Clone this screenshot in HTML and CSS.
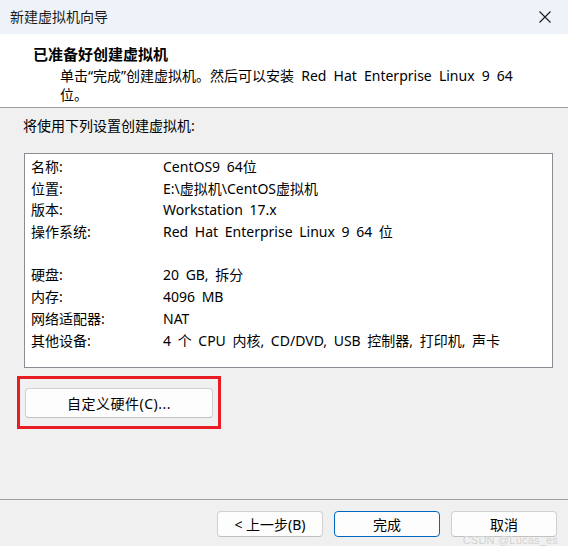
FILE: index.html
```html
<!DOCTYPE html>
<html lang="zh-CN">
<head>
<meta charset="utf-8">
<title>新建虚拟机向导</title>
<link rel="stylesheet" href="styles.css">
</head>
<body>
<div class="window">
  <div class="titlebar">
    <span class="title">新建虚拟机向导</span>
    <svg class="close" width="12" height="12" viewBox="0 0 12 12"><path d="M0.5 0.5 L11.5 11.5 M11.5 0.5 L0.5 11.5" stroke="#1a1a1a" stroke-width="1.1" fill="none"/></svg>
  </div>
  <div class="header">
    <div class="h-title">已准备好创建虚拟机</div>
    <div class="h-sub">单击“完成”创建虚拟机。然后可以安装 Red Hat Enterprise Linux 9 64<br>位。</div>
  </div>
  <div class="content">
    <div class="intro">将使用下列设置创建虚拟机:</div>
    <div class="summary">
      <div class="row"><span class="lbl">名称:</span><span class="val">CentOS9 64位</span></div>
      <div class="row"><span class="lbl">位置:</span><span class="val">E:\虚拟机\CentOS虚拟机</span></div>
      <div class="row"><span class="lbl">版本:</span><span class="val">Workstation 17.x</span></div>
      <div class="row"><span class="lbl">操作系统:</span><span class="val">Red Hat Enterprise Linux 9 64 位</span></div>
      <div class="row blank"></div>
      <div class="row"><span class="lbl">硬盘:</span><span class="val">20 GB, 拆分</span></div>
      <div class="row"><span class="lbl">内存:</span><span class="val">4096 MB</span></div>
      <div class="row"><span class="lbl">网络适配器:</span><span class="val">NAT</span></div>
      <div class="row"><span class="lbl">其他设备:</span><span class="val">4 个 CPU 内核, CD/DVD, USB 控制器, 打印机, 声卡</span></div>
    </div>
    <div class="highlight">
      <button class="btn custom">自定义硬件(C)...</button>
    </div>
  </div>
  <div class="footer">
    <button class="btn">&lt; 上一步(B)</button>
    <button class="btn primary">完成</button>
    <button class="btn">取消</button>
  </div>
  <div class="watermark">CSDN @Lucas_es</div>
</div>
</body>
</html>
```
FILE: styles.css
```css
* { box-sizing: border-box; }
html, body { margin: 0; padding: 0; }
body {
  width: 568px;
  height: 546px;
  overflow: hidden;
  background: #f0f0f0;
  font-family: "Noto Sans", "Noto Sans CJK SC", sans-serif;
  font-size: 14px;
  color: #000;
}
.window {
  position: relative;
  width: 568px;
  height: 546px;
  display: flex;
  flex-direction: column;
}
.titlebar {
  height: 34px;
  background: #eef2f9;
  display: flex;
  align-items: center;
  justify-content: space-between;
  padding: 0 17px 0 10px;
}
.title { font-size: 14px; line-height: 20px; color: #1a1a1a; }
.close { display: block; }
.header {
  height: 74px;
  background: #fff;
  border-bottom: 1px solid #a0a0a0;
  padding: 9px 0 0 33px;
}
.h-title {
  font-weight: bold;
  font-size: 15px;
  line-height: 22px;
  font-family: "Noto Sans CJK SC", sans-serif;
}
.h-sub {
  padding-left: 27px;
  line-height: 19px;
  margin-top: 1px;
  word-spacing: 3.5px;
}
.content {
  flex: 1;
  padding: 8px 15px 0 17px;
}
.intro {
  padding-left: 6px;
  line-height: 20px;
}
.summary {
  margin: 17px 0 0 7px;
  height: 215px;
  background: #fff;
  border: 1px solid #8a8e94;
  padding: 2px 0 0 6px;
}
.row { display: flex; height: 21.7px; line-height: 21.7px; }
.lbl { width: 132px; }
.val { word-spacing: 3px; white-space: nowrap; }
.highlight {
  width: 204px;
  margin-top: 8px;
  border: 3px solid #e81c24;
  padding: 9px 5px 8px 5px;
}
.btn {
  font-family: inherit;
  font-size: 14px;
  color: #000;
  background: #fdfdfd;
  border: 1px solid #d0d0d0;
  border-bottom-color: #c0c0c0;
  border-radius: 4px;
  padding: 0;
}
.custom { width: 188px; height: 30px; display: block; letter-spacing: 0.5px; }
.footer {
  height: 47px;
  border-top: 1px solid #a0a0a0;
  display: flex;
  justify-content: flex-end;
  gap: 11px;
  padding: 11px 11px 0 0;
}
.footer .btn { width: 106px; height: 26px; }
.footer .primary { border: 1px solid #0067c0; }
.watermark {
  position: absolute;
  right: 10px;
  bottom: 0;
  font-family: "Liberation Sans", sans-serif;
  font-size: 11px;
  line-height: 12px;
  color: #cfcfcf;
  text-shadow: 0 0 1px #fff;
  letter-spacing: 0.2px;
}
```
